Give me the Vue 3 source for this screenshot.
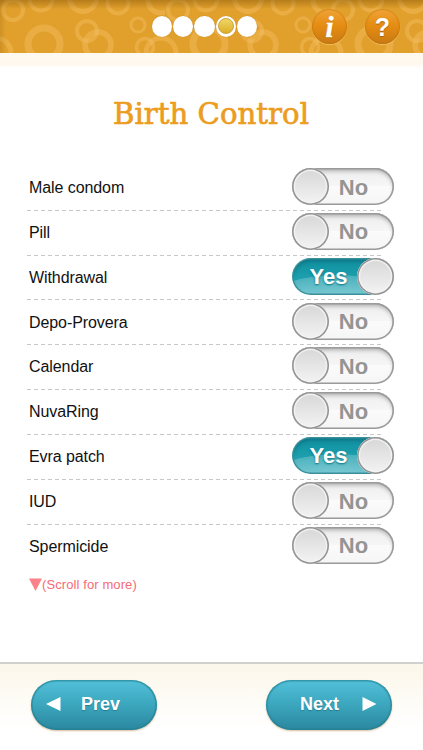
<script setup>
import { ref } from 'vue'

const methods = ref([
  { name: 'Male condom', on: false },
  { name: 'Pill', on: false },
  { name: 'Withdrawal', on: true },
  { name: 'Depo-Provera', on: false },
  { name: 'Calendar', on: false },
  { name: 'NuvaRing', on: false },
  { name: 'Evra patch', on: true },
  { name: 'IUD', on: false },
  { name: 'Spermicide', on: false }
])

const rings = [
  [13, 10, 10, 4], [41, -1, 11.5, 4], [83, -2, 13.5, 5], [118, 3, 10.5, 4],
  [44, 44, 16, 7], [87, 31, 10, 4], [98, 45, 13, 5.5], [138, 25, 7, 3],
  [145, 47, 8.5, 3.5], [161, 53, 15, 5], [-4, 53, 15, 5], [161, 0, 13, 5]
]
</script>

<template>
  <div class="screen">
    <header class="header">
      <svg class="pattern" width="423" height="53" viewBox="0 0 423 53">
        <defs>
          <pattern id="rings" width="165" height="53" patternUnits="userSpaceOnUse">
            <circle v-for="(r, i) in rings" :key="i" :cx="r[0]" :cy="r[1]" :r="r[2]" :stroke-width="r[3]" fill="none" stroke="#f6c66c" stroke-opacity=".36" />
          </pattern>
        </defs>
        <rect width="423" height="53" fill="url(#rings)" />
      </svg>
      <div class="dots">
        <span v-for="n in 5" :key="n" class="dot"><i v-if="n === 4" class="current"></i></span>
      </div>
      <div class="tools">
        <button class="round info">i</button>
        <button class="round help">?</button>
      </div>
    </header>

    <main class="main">
      <h1 class="title">
        <svg width="220" height="50" viewBox="0 0 220 50">
          <text x="11" y="35.5" textLength="196" lengthAdjust="spacingAndGlyphs">Birth Control</text>
        </svg>
      </h1>
      <ul class="list">
        <li v-for="m in methods" :key="m.name" class="row">
          <span class="name">{{ m.name }}</span>
          <button class="toggle" :class="{ on: m.on }" @click="m.on = !m.on">
            <span class="word">{{ m.on ? 'Yes' : 'No' }}</span>
            <span class="knob"></span>
          </button>
        </li>
      </ul>
      <p class="more">
        <svg width="13" height="13" viewBox="0 0 13 13"><path d="M0 .5h13L6.5 13z" fill="#fa8288" /></svg>
        <span>(Scroll for more)</span>
      </p>
    </main>

    <footer class="footer">
      <button class="nav prev">
        <svg width="15" height="14" viewBox="0 0 15 14"><path d="M14.5 0v14L0 7z" fill="#fff" /></svg>
        <span>Prev</span>
      </button>
      <button class="nav next">
        <span>Next</span>
        <svg width="15" height="14" viewBox="0 0 15 14"><path d="M.5 0v14L14.5 7z" fill="#fff" /></svg>
      </button>
    </footer>
  </div>
</template>

<style>
body { margin: 0; background: #fff; }
</style>

<style scoped>
.screen {
  width: 423px;
  height: 750px;
  display: flex;
  flex-direction: column;
  overflow: hidden;
  background: #fff;
  font-family: "Liberation Sans", Arial, sans-serif;
}
button { border: 0; margin: 0; padding: 0; box-sizing: border-box; font-family: inherit; }
.header {
  position: relative;
  flex: none;
  height: 53px;
  box-sizing: border-box;
  display: flex;
  justify-content: space-between;
  padding: 0 23px 0 152px;
  background: #e1a02c;
}
.header::after {
  content: "";
  position: absolute;
  inset: 0;
  background: linear-gradient(rgba(120, 75, 0, .42), rgba(120, 75, 0, 0) 9px), linear-gradient(90deg, rgba(120, 75, 0, .18), rgba(120, 75, 0, 0) 6px);
  pointer-events: none;
}
.pattern { position: absolute; left: 0; top: 0; }
.dots { position: relative; z-index: 1; display: flex; gap: 1px; padding-top: 16px; }
.dot {
  width: 20.2px;
  height: 20.5px;
  border-radius: 50%;
  background: #fff;
  display: flex;
  align-items: center;
  justify-content: center;
  box-shadow: 0 0 1px #bd7d17;
}
.current {
  width: 14px;
  height: 14px;
  border: 1px solid #cda03a;
  border-radius: 50%;
  background: linear-gradient(#efd765, #dcae28);
}
.tools { position: relative; z-index: 1; display: flex; gap: 18px; padding-top: 9px; }
.round {
  width: 35px;
  height: 35px;
  border-radius: 50%;
  color: #fff;
  text-align: center;
  background: linear-gradient(#eea437, #e58c12 48%, #c87a14);
  box-shadow: 0 1px 1px #f0bd60, inset 0 0 1px 1px rgba(188, 109, 4, .45);
  text-shadow: 0 1px 1px #a96405;
}
.info { font: italic bold 29px/34px "Liberation Serif", serif; -webkit-text-stroke: .5px #fff; }
.help { font-weight: bold; font-size: 25px; line-height: 36px; }
.main {
  flex: 1;
  background: linear-gradient(#fffaf1, #fff8ee 11px, #fff 15px);
}
.title { margin: 0; height: 111px; padding: 35px 0 0 102px; box-sizing: border-box; }
.title svg { display: block; }
.title text { font: 400 30px "DejaVu Serif", serif; fill: #ec9c20; stroke: #ec9c20; stroke-width: .7px; }
.list { list-style: none; margin: 0; padding: 0 29px 0 29px; }
.row {
  position: relative;
  height: 44.87px;
  display: flex;
  justify-content: space-between;
  align-items: flex-start;
  padding-top: 4px;
  box-sizing: border-box;
}
.row:not(:last-child)::after {
  content: "";
  position: absolute;
  left: -2px;
  bottom: -1.8px;
  width: 355px;
  height: 1px;
  background: repeating-linear-gradient(90deg, #c8c8c8 0 4px, transparent 4px 7px);
}
.name { font-size: 16px; line-height: 39.4px; letter-spacing: -.08px; color: #111; }
.toggle {
  position: relative;
  width: 102px;
  height: 37px;
  border-radius: 19px;
  display: flex;
  align-items: center;
  flex-direction: row-reverse;
  background: linear-gradient(#ededed, #f6f6f6 48%, #fbfbfb 50%, #f5f5f5);
  box-shadow: inset 0 0 0 1.6px #9a9a9a, inset 0 3px 4px rgba(0, 0, 0, .28);
}
.word {
  flex: 1;
  text-align: center;
  font-size: 22px;
  font-weight: bold;
  line-height: 37px;
  color: #949494;
}
.toggle:not(.on) .word { padding: 1px 18px 0 2px; }
.knob {
  position: relative;
  flex: none;
  width: 37px;
  height: 37px;
  border-radius: 50%;
  background: linear-gradient(#d6d6d6, #f4f4f4);
  box-shadow: inset 0 0 0 1.6px #939393, inset 0 0 1px 3px #f3f3f3;
}
.toggle.on {
  flex-direction: row;
  background:
    radial-gradient(ellipse 66px 20px at 47px 37px, rgba(255, 255, 255, .3) 0, rgba(255, 255, 255, .2) 97%, transparent 100%),
    linear-gradient(#0f8e9f, #1c9eac 50%, #43b2c0);
  box-shadow: inset 0 0 0 1.5px #3a8f9b, inset 0 3px 4px rgba(0, 55, 65, .35);
}
.on .word { padding: 0 0 0 8px; color: #fff; text-shadow: 0 1px 2px #08717d; }
.more {
  margin: 8px 0 0;
  padding-left: 29px;
  display: flex;
  align-items: center;
  color: #f56b76;
  font-size: 13px;
  line-height: 18px;
  letter-spacing: .1px;
}
.footer {
  flex: none;
  height: 88px;
  box-sizing: border-box;
  border-top: 2px solid #d0d0cd;
  padding: 16px 31px 0;
  display: flex;
  justify-content: space-between;
  align-items: flex-start;
  background: linear-gradient(#fcf7ea, #fff 75%);
}
.nav {
  width: 126px;
  height: 50px;
  border-radius: 25px;
  display: flex;
  align-items: center;
  padding-bottom: 2px;
  color: #fff;
  font-size: 18px;
  font-weight: bold;
  background: linear-gradient(#53c0da, #3da9c0 45%, #2b87a0);
  box-shadow: inset 0 0 1px 1.5px rgba(34, 126, 142, .65), 0 1px 2px #d9bd9b;
  text-shadow: 0 1px 1px #277c90;
}
.prev { padding-left: 15px; gap: 20px; }
.next { padding-left: 34px; gap: 23px; }
</style>
